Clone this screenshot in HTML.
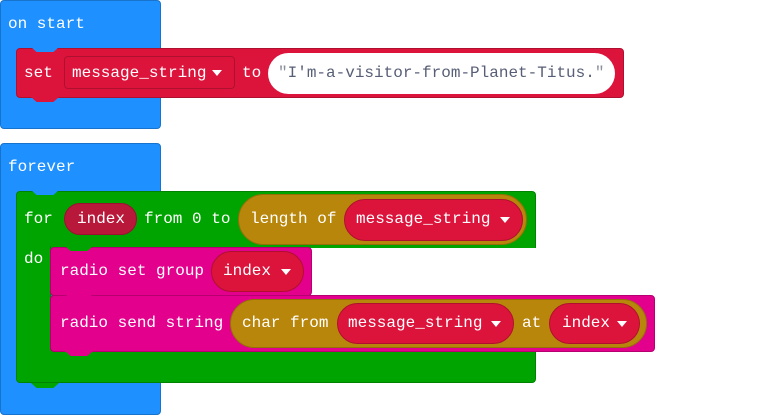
<!DOCTYPE html>
<html><head><meta charset="utf-8"><style>
*{margin:0;padding:0;box-sizing:border-box}
body{width:758px;height:415px;background:#fff;position:relative;overflow:hidden;font-family:"Liberation Mono",monospace;font-size:16px;color:#fff}
.b{position:absolute}
.t{position:absolute;line-height:20px;white-space:pre}
.blue{background:#1e90ff;border:1px solid #1873cc;border-radius:4px}
.red{background:#dc143c;border:1px solid #b0102f;border-radius:4px}
.green{background:#00a400;border:1px solid #008300;border-radius:4px}
.pink{background:#e3008c;border:1px solid #b60070;border-radius:4px}
.pill{border-radius:999px}
.dd::after{content:"";position:absolute;right:12px;top:50%;margin-top:-3px;border-left:5px solid transparent;border-right:5px solid transparent;border-top:6px solid #fff}
</style></head><body>
<!-- on start -->
<div class="b blue" style="left:0;top:0;width:161px;height:129px"></div>
<div class="t" style="left:8px;top:14px">on start</div>
<div class="b red" style="left:16px;top:48px;width:608px;height:50px"></div>
<div class="b" style="left:31px;top:47px;width:28px;height:5px;background:#1e90ff;clip-path:polygon(0 0,100% 0,80% 100%,20% 100%)"></div>
<div class="b" style="left:31px;top:97px;width:28px;height:5px;background:#dc143c;clip-path:polygon(0 0,100% 0,80% 100%,20% 100%)"></div>
<div class="t" style="left:24px;top:63px">set</div>
<div class="b dd" style="left:64px;top:56px;width:171px;height:33px;border:1px solid #b0102f;border-radius:4px"></div>
<div class="t" style="left:72px;top:63px">message_string</div>
<div class="t" style="left:242px;top:63px">to</div>
<div class="b pill" style="left:268px;top:53px;width:347px;height:41px;background:#fff"></div>
<div class="t" style="left:278px;top:63px;color:#575e75"><span style="color:#8a8f9c">"</span>I'm-a-visitor-from-Planet-Titus.<span style="color:#8a8f9c">"</span></div>

<!-- forever -->
<div class="b blue" style="left:0;top:143px;width:161px;height:272px"></div>
<div class="t" style="left:8px;top:157px">forever</div>
<!-- for -->
<div class="b green" style="left:16px;top:191px;width:520px;height:57px;border-bottom:none;border-radius:4px 4px 0 0"></div>
<div class="b green" style="left:16px;top:246px;width:35px;height:110px;border-top:none;border-bottom:none;border-radius:0"></div>
<div class="b green" style="left:16px;top:350px;width:520px;height:33px;border-top:none;border-radius:0 0 4px 4px"></div>
<div class="b" style="left:31px;top:190px;width:28px;height:5px;background:#1e90ff;clip-path:polygon(0 0,100% 0,80% 100%,20% 100%)"></div>
<div class="b" style="left:31px;top:383px;width:28px;height:5px;background:#00a400;clip-path:polygon(0 0,100% 0,80% 100%,20% 100%)"></div>
<div class="t" style="left:24px;top:209px">for</div>
<div class="b pill" style="left:64px;top:203px;width:73px;height:32px;background:#b8193a;border:1px solid #9a1230"></div>
<div class="t" style="left:77px;top:209px">index</div>
<div class="t" style="left:144px;top:209px">from 0 to</div>
<div class="b pill" style="left:238px;top:194px;width:289px;height:51px;background:#b8860b;border:1px solid #957008"></div>
<div class="t" style="left:250px;top:209px">length of</div>
<div class="b pill dd" style="left:344px;top:199px;width:179px;height:42px;background:#dc143c;border:1px solid #b0102f"></div>
<div class="t" style="left:356px;top:209px">message_string</div>
<div class="t" style="left:24px;top:249px">do</div>
<!-- radio set group -->
<div class="b pink" style="left:50px;top:247px;width:262px;height:49px"></div>
<div class="b" style="left:65px;top:246px;width:28px;height:5px;background:#00a400;clip-path:polygon(0 0,100% 0,80% 100%,20% 100%)"></div>
<div class="t" style="left:60px;top:261px">radio set group</div>
<div class="b pill dd" style="left:211px;top:251px;width:93px;height:41px;background:#dc143c;border:1px solid #b0102f"></div>
<div class="t" style="left:223px;top:261px">index</div>
<!-- radio send string -->
<div class="b pink" style="left:50px;top:295px;width:605px;height:57px"></div>
<div class="b" style="left:65px;top:294px;width:28px;height:5px;background:#e3008c;clip-path:polygon(0 0,100% 0,80% 100%,20% 100%)"></div>
<div class="b" style="left:65px;top:351px;width:28px;height:5px;background:#e3008c;clip-path:polygon(0 0,100% 0,80% 100%,20% 100%)"></div>
<div class="t" style="left:60px;top:313px">radio send string</div>
<div class="b pill" style="left:230px;top:299px;width:417px;height:49px;background:#b8860b;border:1px solid #957008"></div>
<div class="t" style="left:242px;top:313px">char from</div>
<div class="b pill dd" style="left:337px;top:303px;width:177px;height:41px;background:#dc143c;border:1px solid #b0102f"></div>
<div class="t" style="left:348px;top:313px">message_string</div>
<div class="t" style="left:522px;top:313px">at</div>
<div class="b pill dd" style="left:549px;top:303px;width:91px;height:41px;background:#dc143c;border:1px solid #b0102f"></div>
<div class="t" style="left:562px;top:313px">index</div>
</body></html>
